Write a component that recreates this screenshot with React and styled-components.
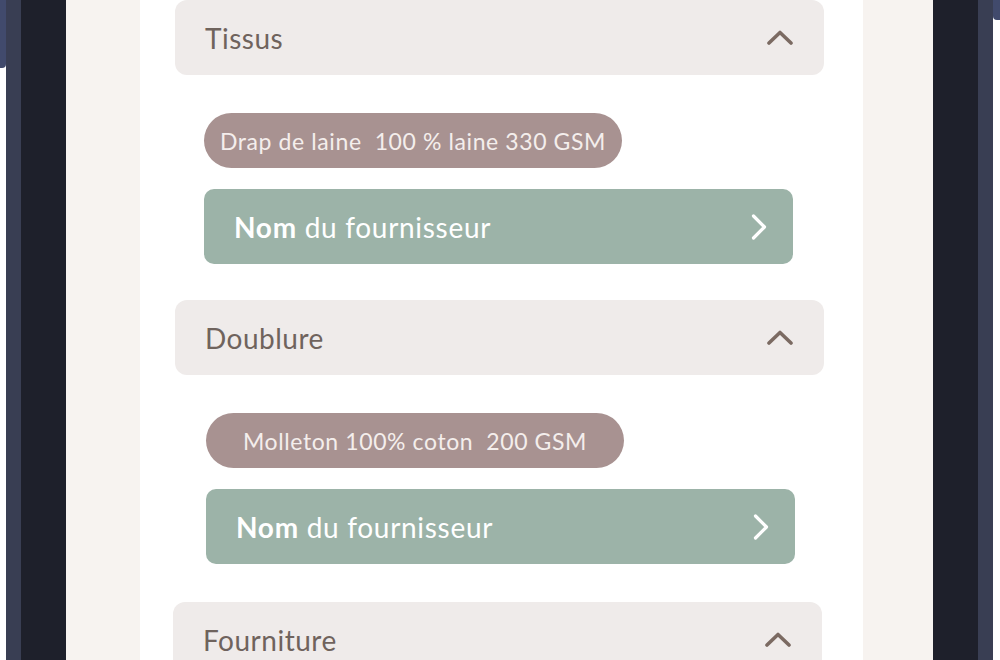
import styled, { createGlobalStyle } from "styled-components";

const GlobalStyle = createGlobalStyle`
  html, body {
    margin: 0;
    padding: 0;
    background: #ffffff;
  }
  body {
    font-family: Lato, "Liberation Sans", sans-serif;
  }
`;

const Frame = styled.div`
  display: flex;
  flex-flow: row nowrap;
  height: 660px;
  width: 1000px;
  overflow: hidden;
  background: #ffffff;
`;

// outermost sliver of the device edge, only a short tab of it shows
const EdgeStrip = styled.div`
  flex: 0 0 ${({ $width }) => $width}px;
  align-self: flex-start;
  height: ${({ $tab }) => $tab}px;
  background: #414a6c;
  border-radius: ${({ $side }) => ($side === "left" ? "0 0 4px 0" : "0 0 0 4px")};
`;

const Bezel = styled.div`
  flex: 0 0 ${({ $width }) => $width}px;
  background: ${({ $tone }) => ($tone === "dark" ? "#1e202b" : "#393e53")};
`;

const Screen = styled.div`
  flex: 1 1 auto;
  background: #f7f3f0;
  padding: 0 70px 0 74px;
  display: flex;
`;

const Panel = styled.div`
  flex: 1 1 auto;
  background: #ffffff;
  padding: 0 39px 0 35px;
  display: flex;
  flex-flow: column nowrap;
`;

const Section = styled.section`
  display: flex;
  flex-flow: column nowrap;
  margin-left: ${({ $shift }) => $shift || 0}px;
  margin-right: ${({ $shift }) => -($shift || 0)}px;
  margin-bottom: ${({ $gap }) => $gap || 0}px;
`;

const SectionHeader = styled.div`
  display: flex;
  flex-flow: row nowrap;
  align-items: center;
  justify-content: space-between;

  height: 75px;
  padding: 0 31px 0 30px;
  border-radius: 12px;
  background: #efebea;
  color: #6f635d;
  font-size: 28px;
  letter-spacing: 0.5px;
  box-sizing: border-box;
  flex-shrink: 0;
`;

const SectionBody = styled.div`
  display: flex;
  flex-flow: column nowrap;
  padding: 38px 0 0 ${({ $indent }) => $indent}px;
`;

const Pill = styled.div`
  width: 418px;
  height: 55px;
  border-radius: 28px;
  background: #a89291;
  color: #f4eeec;
  font-size: 23px;
  letter-spacing: 0.6px;
  white-space: pre;

  display: flex;
  align-items: center;
  justify-content: center;
`;

const SupplierButton = styled.div`
  display: flex;
  flex-flow: row nowrap;
  align-items: center;
  justify-content: space-between;

  width: 589px;
  height: 75px;
  margin-top: 21px;
  padding: 0 26px 0 30px;
  box-sizing: border-box;
  border-radius: 10px;
  background: #9cb3a8;
  color: #ffffff;
  font-size: 28px;
  letter-spacing: 0.7px;
  cursor: pointer;

  & b {
    font-weight: 700;
  }
`;

const ChevronUp = () => (
  <svg width="26" height="15" viewBox="0 0 26 15" fill="none">
    <path d="M2 13 L13 2.5 L24 13" stroke="#7b6a62" strokeWidth="3.6" strokeLinecap="round" strokeLinejoin="round" />
  </svg>
);

const ChevronRight = () => (
  <svg width="16" height="26" viewBox="0 0 16 26" fill="none">
    <path d="M2.5 2 L13.5 13 L2.5 24" stroke="#ffffff" strokeWidth="3.2" strokeLinecap="round" strokeLinejoin="round" />
  </svg>
);

const sections = [
  { title: "Tissus", fabric: "Drap de laine  100 % laine 330 GSM", indent: 29, gap: 36 },
  { title: "Doublure", fabric: "Molleton 100% coton  200 GSM", indent: 31, gap: 38 },
];

export default function App() {
  return (
    <>
      <GlobalStyle />
      <Frame>
        <EdgeStrip $width={6} $tab={68} $side="left" />
        <Bezel $width={15} />
        <Bezel $width={45} $tone="dark" />
        <Screen>
          <Panel>
            {sections.map((s) => (
              <Section key={s.title} $gap={s.gap}>
                <SectionHeader>
                  <span>{s.title}</span>
                  <ChevronUp />
                </SectionHeader>
                <SectionBody $indent={s.indent}>
                  <Pill>{s.fabric}</Pill>
                  <SupplierButton>
                    <span><b>Nom</b> du fournisseur</span>
                    <ChevronRight />
                  </SupplierButton>
                </SectionBody>
              </Section>
            ))}
            <Section $shift={-2}>
              <SectionHeader>
                <span>Fourniture</span>
                <ChevronUp />
              </SectionHeader>
            </Section>
          </Panel>
        </Screen>
        <Bezel $width={45} $tone="dark" />
        <Bezel $width={15} />
        <EdgeStrip $width={7} $tab={20} $side="right" />
      </Frame>
    </>
  );
}
